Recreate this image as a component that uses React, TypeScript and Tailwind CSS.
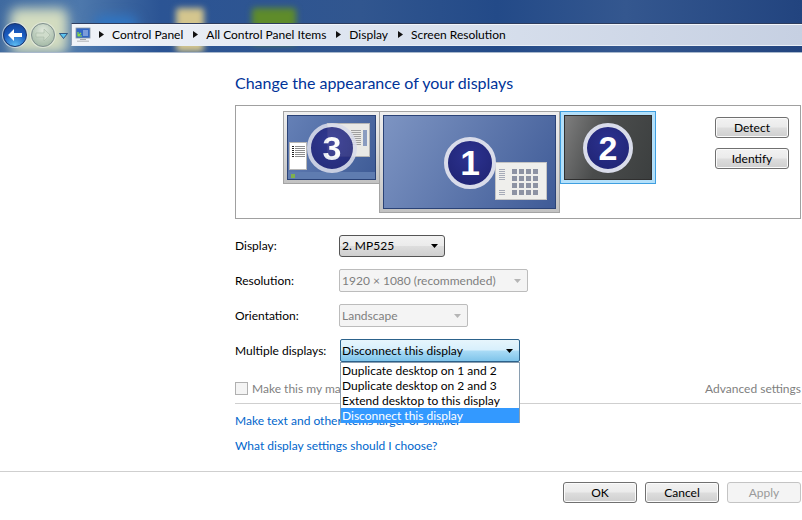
import React from "react";

const font = { fontFamily: 'Lato, "Noto Sans", sans-serif' };

function Caret({ color = "#000", size = 3 }: { color?: string; size?: number }) {
  return (
    <svg width={size * 2 + 1} height={size + 1} viewBox="0 0 7 4" className="shrink-0">
      <path d="M0 0h7L3.500 4z" fill={color} />
    </svg>
  );
}

function Btn({ label, disabled = false }: { label: string; disabled?: boolean }) {
  return (
    <div
      className={
        disabled
          ? "w-[74px] h-[21px] flex items-center justify-center rounded-[3px] border border-[#c4c4c4] bg-[#f4f4f4] text-[#9a9a9a] text-[12px]"
          : "w-[74px] h-[21px] flex items-center justify-center rounded-[3px] border border-[#707070] bg-[linear-gradient(#f2f2f2_0%,#ebebeb_48%,#dddddd_52%,#cfcfcf_100%)] shadow-[inset_0_0_0_1px_#fbfbfb] text-black text-[12px]"
      }
    >
      {label}
    </div>
  );
}

function Badge({ n, size, faded = false }: { n: string; size: number; faded?: boolean }) {
  return (
    <div
      className={`rounded-full border-[4px] border-[#d9dcea] bg-[radial-gradient(circle_at_50%_35%,#2c3290,#1e2270)] text-white font-bold flex items-center justify-center ${faded ? "opacity-[0.88]" : ""}`}
      style={{ width: size, height: size, fontSize: size * 0.68, fontFamily: '"Liberation Sans", sans-serif' }}
    >
      {n}
    </div>
  );
}

function MiniLines({ rows }: { rows: number }) {
  return (
    <div className="flex flex-col gap-[1px]">
      {Array.from({ length: rows }).map((_, i) => (
        <div key={i} className="w-[6px] h-[1px] bg-[#a6abb8]" />
      ))}
    </div>
  );
}

const bezel = "border border-[#a4a4a4] bg-[linear-gradient(#efefef,#d6d6d6_60%,#c2c2c2)] p-[3px]";

function Monitors() {
  return (
    <div className="relative h-full">
      {/* Monitor 3 */}
      <div className={`absolute left-[47px] top-[5px] w-[97px] h-[73px] ${bezel}`}>
        <div className="relative w-full h-full border border-[#2a4276] bg-[linear-gradient(120deg,#6580b6,#3e5b96)] overflow-hidden">
          <div className="absolute left-[39px] top-[7px] w-[43px] h-[34px] bg-[#e9e9e6] border border-[#b6b6b6] pl-[20px] pr-[2px] pt-[6px] flex justify-end gap-[2px]">
            <div className="flex flex-col gap-[1px]">
              {[0, 1, 2, 3, 4, 5, 6, 7].map((i) => (
                <div key={i} className="w-[10px] h-[1px] bg-[#a0a0a0]" />
              ))}
            </div>
            <div className="w-[4px] h-[16px] bg-[#8a9cc0]" />
          </div>
          <div className="absolute left-0 right-0 bottom-0 h-[7px] bg-[#5f7cb0]" />
          <div className="absolute left-[1px] top-[26px] w-[18px] h-[28px] bg-white border border-[#b6b6b6] pl-[2px] pt-[3px] flex flex-col gap-[1px]">
            {[0, 1, 2, 3, 4, 5].map((i) => (
              <div key={i} className="flex gap-[1px] items-center">
                <div className="w-[2px] h-[1px] bg-[#222]" />
                <div className="w-[10px] h-[1px] bg-[#8d8d8d]" />
              </div>
            ))}
          </div>
          <div className="absolute left-[3px] bottom-[1px] w-[4px] h-[4px] bg-[#7fb04f]" />
        </div>
        <div className="absolute left-[23px] top-[11px]">
          <Badge n="3" size={50} faded />
        </div>
      </div>
      {/* Monitor 1 */}
      <div className={`absolute left-[143px] top-[5px] w-[181px] h-[102px] ${bezel}`}>
        <div className="relative w-full h-full border border-[#2a4276] bg-[linear-gradient(120deg,#7d94c2,#3f5b97)]">
          <div className="absolute left-[111px] top-[46px] w-[52px] h-[38px] bg-[#efefec] border border-[#c4c4c4] px-[3px] pt-[6px] flex gap-[7px]">
            <div className="flex flex-col justify-between h-[26px]">
              <MiniLines rows={6} />
              <MiniLines rows={3} />
            </div>
            <div className="grid grid-cols-4 gap-[2px] h-fit">
              {Array.from({ length: 16 }).map((_, i) => (
                <div key={i} className="w-[5px] h-[5px] bg-[#8d93a3]" />
              ))}
            </div>
          </div>
        </div>
        <div className="absolute left-[64px] top-[25px]">
          <Badge n="1" size={52} />
        </div>
      </div>
      {/* Monitor 2 */}
      <div className="absolute left-[324px] top-[5px] w-[96px] h-[73px] border border-[#3f9fe0] bg-[#b4e0fa] p-[3px]">
        <div className="w-full h-full bg-[linear-gradient(110deg,#7e7e7e_0%,#4a4c4c_45%,#3c3f3f_100%)] border border-[#2f2f2f]" />
        <div className="absolute left-[22px] top-[11px]">
          <Badge n="2" size={50} />
        </div>
      </div>
    </div>
  );
}

function Select({
  text,
  width,
  disabled = false,
}: {
  text: string;
  width: string;
  disabled?: boolean;
}) {
  return disabled ? (
    <div className={`${width} h-[23px] flex items-center justify-between pl-[2px] pr-[6px] rounded-[2px] border border-[#bcbcbc] bg-[#f4f4f4] text-[#7f7f7f] text-[12px]`}>
      <span>{text}</span>
      <Caret color="#b5b5b5" />
    </div>
  ) : (
    <div className={`${width} h-[22px] flex items-center justify-between pl-[2px] pr-[6px] rounded-[3px] border border-[#555] bg-[linear-gradient(#f2f2f2_0%,#ebebeb_48%,#dddddd_52%,#cfcfcf_100%)] text-black text-[12px]`}>
      <span>{text}</span>
      <Caret />
    </div>
  );
}

function Row({ label, children, className }: { label: string; children: React.ReactNode; className: string }) {
  return (
    <div className={`flex items-center ${className}`}>
      <div className="w-[104px] shrink-0 text-[12px] text-black">{label}</div>
      {children}
    </div>
  );
}

function Crumb({ text, gap }: { text: string; gap: string }) {
  return (
    <div className={`flex items-center ${gap}`}>
      <svg width="5" height="7" viewBox="0 0 5 7" className="mr-[8px] shrink-0">
        <path d="M0 0l5 3.500L0 7z" fill="#111" />
      </svg>
      <span>{text}</span>
    </div>
  );
}

export default function App() {
  return (
    <div className="w-[802px] h-[520px] bg-white overflow-hidden flex flex-col" style={font}>
      {/* Aero title area */}
      <div className="relative h-[53px] shrink-0 bg-[linear-gradient(90deg,#3f6aa0_0%,#4d78ac_10%,#2b5494_20%,#31568f_45%,#234a88_62%,#34578f_78%,#22447f_100%)] border-b border-[#a9b8cc] overflow-hidden">
        <div className="absolute left-[10px] top-[8px] w-[58px] h-[46px] rounded-[8px] bg-[#d3dcc0] blur-[6px]" />
        <div className="absolute left-[95px] top-[16px] w-[42px] h-[24px] rounded-[6px] bg-[#2f76c4] blur-[6px]" />
        <div className="absolute left-[176px] top-[8px] w-[28px] h-[44px] rounded-[3px] bg-[#d4c68e] blur-[3px]" />
        <div className="absolute left-[252px] top-[8px] w-[44px] h-[36px] rounded-[3px] bg-[#5f8c2a] blur-[3px]" />
        <div className="absolute left-[3px] top-[23px] w-[24px] h-[24px] rounded-full border border-[#16336e] bg-[radial-gradient(circle_at_50%_100%,#5fc0f4_0%,#1a5cc0_55%,#123c8e_100%)] shadow-[0_0_0_1px_#dfe7f2aa] flex items-center justify-center">
          <svg width="16" height="14" viewBox="0 0 16 14">
            <path d="M1 7l6-6v4h8v4H7v4z" fill="#fff" />
          </svg>
        </div>
        <div className="absolute left-[31px] top-[23px] w-[24px] h-[24px] rounded-full border border-[#7f8f8f] bg-[radial-gradient(circle_at_50%_30%,#e0e8dc,#a8bdaa_78%)] shadow-[0_0_0_1px_#e8eee4aa] flex items-center justify-center">
          <svg width="16" height="14" viewBox="0 0 16 14">
            <path d="M15 7L9 1v4H1v4h8v4z" fill="#cfdccb" stroke="#9fb19f" strokeWidth="0.5" />
          </svg>
        </div>
        <div className="absolute left-[59px] top-[33px]">
          <svg width="9" height="6" viewBox="0 0 9 6">
            <path d="M0.500 0.500h8L4.500 5.500z" fill="#5cc4ee" stroke="#1b3d70" strokeWidth="0.8" />
          </svg>
        </div>
        {/* address bar */}
        <div className="absolute left-[71px] top-[23px] right-0 h-[23px] border-t border-t-[#2e3d5e] border-l border-l-[#8c9cb2] border-b border-b-[#e8eef6] bg-[linear-gradient(90deg,#f0f3f8,#dfe6f1_35%,#c6d0e2)] shadow-[inset_0_1px_0_#f2f5fa] flex items-center text-[12px] text-black">
          <svg width="16" height="16" viewBox="0 0 16 16" className="ml-[3px] mr-[8px] shrink-0">
            <rect x="1" y="1" width="14" height="10" fill="#3266c4" stroke="#8b98a6" strokeWidth="0.8" />
            <path d="M3 9l3-3M3 5v4h4" stroke="#8de040" strokeWidth="1.2" fill="none" />
            <path d="M8 4h5M8 6h5M8 8h5" stroke="#e7eefc" strokeWidth="0.8" />
            <rect x="5" y="12" width="6" height="1" fill="#a4a8ad" />
            <rect x="2" y="13.500" width="12" height="1.500" fill="#c3c6ca" />
          </svg>
          <Crumb text="Control Panel" gap="mr-[10px]" />
          <Crumb text="All Control Panel Items" gap="mr-[10px]" />
          <Crumb text="Display" gap="mr-[10px]" />
          <Crumb text="Screen Resolution" gap="" />
        </div>
      </div>

      {/* Body */}
      <div className="flex flex-col pl-[235px] pr-px">
        <div className="mt-[20px] text-[16px] leading-[20px] text-[#003399]">Change the appearance of your displays</div>

        <div className="mt-[12px] h-[114px] border border-[#a0a0a0] flex">
          <div className="flex-1 h-full">
            <Monitors />
          </div>
          <div className="flex flex-col gap-[10px] pt-[11px] pr-[11px]">
            <Btn label="Detect" />
            <Btn label="Identify" />
          </div>
        </div>

        <Row label="Display:" className="mt-[16px]">
          <Select text="2. MP525" width="w-[106px]" />
        </Row>
        <Row label="Resolution:" className="mt-[12px]">
          <Select text="1920 × 1080 (recommended)" width="w-[189px]" disabled />
        </Row>
        <Row label="Orientation:" className="mt-[12px]">
          <Select text="Landscape" width="w-[129px]" disabled />
        </Row>

        <div className="relative">
          <Row label="Multiple displays:" className="mt-[12px]">
            <div className="ml-px w-[180px] h-[23px] flex items-center justify-between pl-[1px] pr-[6px] rounded-[2px] border border-[#2c628b] bg-[linear-gradient(#e6f5fc_0%,#d7effc_48%,#a9dbf6_52%,#7fc4ea_100%)] text-black text-[12px]">
              <span>Disconnect this display</span>
              <Caret />
            </div>
          </Row>
          {/* Open list */}
          <div className="absolute z-10 left-[105px] top-[35px] w-[180px] h-[61px] bg-white border border-[#8a9eb0] text-[12px] leading-[15px] text-black">
            <div className="pl-[1px]">Duplicate desktop on 1 and 2</div>
            <div className="pl-[1px]">Duplicate desktop on 2 and 3</div>
            <div className="pl-[1px]">Extend desktop to this display</div>
            <div className="pl-[1px] bg-[#3399ff] text-white">Disconnect this display</div>
          </div>
        </div>

        <div className="mt-[20px] flex items-center justify-between h-[13px]">
          <div className="flex items-center gap-[4px] text-[12px] text-[#7f7f7f]">
            <div className="w-[13px] h-[13px] border border-[#b0b0b0] bg-[#f4f4f4]" />
            <span>Make this my main display</span>
          </div>
          <span className="text-[12px] text-[#7f7f7f]">Advanced settings</span>
        </div>

        <div className="mt-[8px] h-px bg-[#cfcfcf]" />

        <div className="mt-[9px] text-[12px] leading-[16px] text-[#0066cc]">Make text and other items larger or smaller</div>
        <div className="mt-[9px] text-[12px] leading-[16px] text-[#0066cc]">What display settings should I choose?</div>
      </div>

      {/* Footer */}
      <div className="mt-[17px] h-px bg-[#cfcfcf] shrink-0" />
      <div className="mt-[10px] flex justify-end gap-[8px] pr-px">
        <Btn label="OK" />
        <Btn label="Cancel" />
        <Btn label="Apply" disabled />
      </div>
    </div>
  );
}
